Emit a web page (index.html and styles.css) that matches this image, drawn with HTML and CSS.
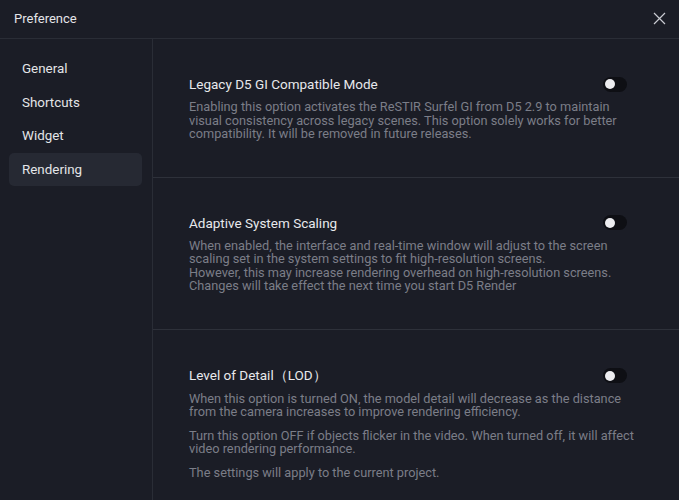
FILE: index.html
```html
<!DOCTYPE html>
<html lang="en">
<head>
<meta charset="utf-8">
<title>Preference</title>
<link rel="stylesheet" href="styles.css">
</head>
<body>
<div class="dialog">
  <header class="header">
    <span class="header-title">Preference</span>
    <button class="close" aria-label="Close">
      <svg width="13" height="13" viewBox="0 0 13 13"><path d="M1 1L12 12M12 1L1 12" stroke="#c9cbd1" stroke-width="1.2" fill="none"/></svg>
    </button>
  </header>
  <div class="body">
    <nav class="sidebar">
      <div class="nav-item">General</div>
      <div class="nav-item">Shortcuts</div>
      <div class="nav-item">Widget</div>
      <div class="nav-item active">Rendering</div>
    </nav>
    <main class="content">
      <section class="section">
        <div class="row">
          <h3 class="title">Legacy D5 GI Compatible Mode</h3>
          <span class="toggle"><span class="knob"></span></span>
        </div>
        <p class="desc">Enabling this option activates the ReSTIR Surfel GI from D5 2.9 to maintain visual consistency across legacy scenes. This option solely works for better compatibility. It will be removed in future releases.</p>
      </section>
      <section class="section">
        <div class="row">
          <h3 class="title">Adaptive System Scaling</h3>
          <span class="toggle"><span class="knob"></span></span>
        </div>
        <p class="desc">When enabled, the interface and real-time window will adjust to the screen scaling set in the system settings to fit high-resolution screens.<br>However, this may increase rendering overhead on high-resolution screens.<br>Changes will take effect the next time you start D5 Render</p>
      </section>
      <section class="section last">
        <div class="row">
          <h3 class="title">Level of Detail（LOD）</h3>
          <span class="toggle"><span class="knob"></span></span>
        </div>
        <p class="desc">When this option is turned ON, the model detail will decrease as the distance from the camera increases to improve rendering efficiency.</p>
        <p class="desc gap">Turn this option OFF if objects flicker in the video. When turned off, it will affect video rendering performance.</p>
        <p class="desc gap">The settings will apply to the current project.</p>
      </section>
    </main>
  </div>
</div>
</body>
</html>
```

FILE: styles.css
```css
* { box-sizing: border-box; }
html, body {
  margin: 0;
  padding: 0;
  background: #1b1d26;
  font-family: Roboto, "Liberation Sans", sans-serif;
}
.dialog {
  width: 679px;
  height: 500px;
  display: flex;
  flex-direction: column;
  background: #1b1d26;
  overflow: hidden;
}
.header {
  height: 39px;
  flex: none;
  display: flex;
  align-items: center;
  justify-content: space-between;
  padding: 0 13px 2px 14px;
  border-bottom: 1px solid #2a2d36;
}
.header-title {
  color: #e4e5e8;
  font-size: 13px;
}
.close {
  background: none;
  border: 0;
  padding: 0;
  width: 13px;
  height: 13px;
  display: flex;
}
.body {
  flex: 1;
  display: flex;
  min-height: 0;
}
.sidebar {
  width: 153px;
  flex: none;
  border-right: 1px solid #2a2d36;
  padding: 13px 10px 0 9px;
  display: flex;
  flex-direction: column;
}
.nav-item {
  height: 33.5px;
  display: flex;
  align-items: center;
  padding-left: 13px;
  color: #e4e5e8;
  font-size: 13.4px;
  border-radius: 5px;
}
.nav-item.active {
  background: #262933;
}
.content {
  flex: 1;
  display: flex;
  flex-direction: column;
}
.section {
  padding: 37px 43px 36px 36px;
  border-bottom: 1px solid #2e313a;
}
.section.last {
  border-bottom: 0;
  padding-top: 38px;
}
.row {
  display: flex;
  align-items: center;
  justify-content: space-between;
  height: 16px;
  margin-bottom: 8px;
  padding-right: 9px;
}
.title {
  margin: 0;
  font-weight: 400;
  font-size: 13.5px;
  color: #e8e9ec;
}
.toggle {
  width: 24px;
  height: 15px;
  border-radius: 8px;
  background: #0e0f14;
  display: flex;
  align-items: center;
  padding-left: 2px;
}
.knob {
  width: 10px;
  height: 10px;
  border-radius: 50%;
  background: #ececef;
}
.desc {
  margin: 0;
  font-size: 12.75px;
  line-height: 13.5px;
  color: #7b7e88;
}
.desc.gap {
  margin-top: 10px;
}
```
